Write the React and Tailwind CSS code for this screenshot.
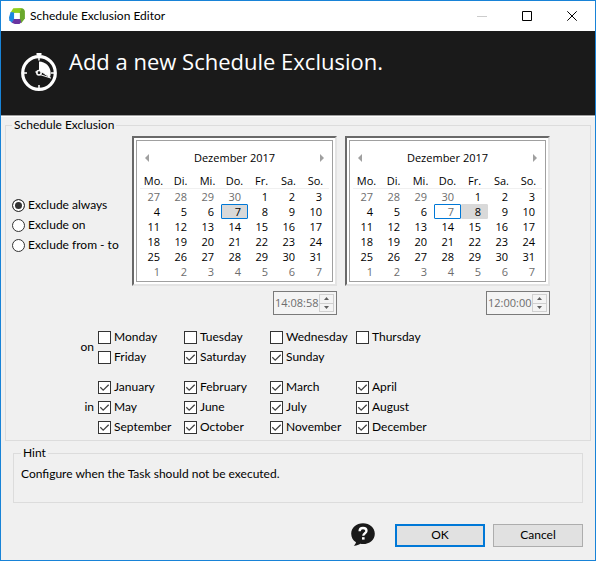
import React from 'react';

const DAYS = ['Mo.', 'Di.', 'Mi.', 'Do.', 'Fr.', 'Sa.', 'So.'];
const WEEKS = [
  [27, 28, 29, 30, 1, 2, 3],
  [4, 5, 6, 7, 8, 9, 10],
  [11, 12, 13, 14, 15, 16, 17],
  [18, 19, 20, 21, 22, 23, 24],
  [25, 26, 27, 28, 29, 30, 31],
  [1, 2, 3, 4, 5, 6, 7],
];

const WEEKDAYS = [
  ['Monday', false], ['Tuesday', false], ['Wednesday', false], ['Thursday', false],
  ['Friday', false], ['Saturday', true], ['Sunday', true],
];
const MONTHS = [
  'January', 'February', 'March', 'April', 'May', 'June',
  'July', 'August', 'September', 'October', 'November', 'December',
];

function Logo() {
  return (
    <svg className="size-4" viewBox="0 0 16 16" aria-hidden="true">
      <path d="M4.300 0.300L12.500 0 11 4.900H4.800L1.600 4.500z" fill="#8fce1c" />
      <path d="M12.500 0c1.800 0.400 3.300 1.800 3.400 3.600v7l-3.700 4.600-1.700-3.700V4.600z" fill="#69a82c" />
      <path d="M1.600 3.900l3.700 0.500v6.900l-2.200 3.600L0.300 12.300 0 9.500z" fill="#1e88e0" />
      <path d="M5 11h6.100l1.200 3.200-1.800 1.800H5.800l-3-1.300z" fill="#6a35a0" />
      <path d="M5.200 4.900h5.600V11H5.200z" fill="#fff" />
    </svg>
  );
}

function Stopwatch() {
  return (
    <svg className="h-10 w-9 shrink-0" viewBox="0 0 36 40" fill="none" aria-hidden="true">
      <path d="M15.500 2h5v2h-1v2h-3V4h-1z" fill="#fff" />
      <circle cx="18" cy="22" r="16.300" stroke="#fff" strokeWidth="3.200" />
      <path d="M18 6v3.500M18 34v3.500M3 22h3M30 22h3" stroke="#fff" strokeWidth="1.500" />
      <path d="M18 10.500c6.500 0 11.500 5 11.700 11.500 0 1.600-0.300 3-0.700 4.200L20.500 21 18 19z" fill="#fff" />
      <path d="M19.500 20l10.200 7-11-3.500z" fill="#1a1a1a" stroke="#fff" strokeWidth="1" />
      <circle cx="18" cy="21.800" r="2.200" fill="#1a1a1a" stroke="#fff" strokeWidth="1.500" />
      <path d="M14.500 20.800l2 0.600" stroke="#fff" strokeWidth="1.500" />
    </svg>
  );
}

function HelpIcon() {
  return (
    <svg className="h-6 w-6" viewBox="0 0 24 24" fill="none" aria-hidden="true">
      <path d="M12 0.300C5.400 0.300 0.200 4.700 0.200 10.700c0 3.600 1.800 6.600 4.800 8.500-0.300 1.300-1 2.400-2.300 3.400 2.600 0.200 4.800-0.500 6.600-1.800 0.900 0.200 1.800 0.300 2.700 0.300 6.600 0 11.800-4.400 11.800-10.400S18.600 0.300 12 0.300z" fill="#1a1a1a" />
      <path d="M8.600 8.200C8.600 6 10 5 12 5s3.500 1.100 3.500 3c0 2.200-3.200 2.300-3.200 4.700" stroke="#fff" strokeWidth="2.300" />
      <path d="M11 14.200h2.600v2.400H11z" fill="#fff" />
    </svg>
  );
}

function dayClass(week, day, selected) {
  const outside = (week === 0 && day > 20) || week === 5;
  const today = week === 1 && day === 7;
  const chosen = week === 1 && day === selected;
  if (today && chosen) return 'border-[#0078d7] bg-[#d9d9d9] text-black';
  if (today) return 'border-[#0078d7] bg-white text-[#6d6d6d]';
  if (chosen) return 'border-[#d9d9d9] bg-[#d9d9d9] text-black';
  return outside ? 'border-transparent text-[#6d6d6d]' : 'border-transparent text-black';
}

function Calendar({ selected }) {
  return (
    <div className="border-2 border-t-[#696969] border-r-[#e3e3e3] border-b-[#e3e3e3] border-l-[#696969] bg-white p-0.5">
      <div className="border border-[#a0a0a0] px-[3px] pb-0.5">
        <div className="flex h-[33px] items-center justify-between px-[5px]">
          <button type="button" aria-label="Previous month">
            <svg className="h-2 w-1" viewBox="0 0 4 8"><path d="M4 0v8L0 4z" fill="#a0a0a0" /></svg>
          </button>
          <span>Dezember 2017</span>
          <button type="button" aria-label="Next month">
            <svg className="h-2 w-1" viewBox="0 0 4 8"><path d="M0 0v8l4-4z" fill="#a0a0a0" /></svg>
          </button>
        </div>
        <table className="w-full table-fixed border-separate border-spacing-0">
          <thead>
            <tr>
              {DAYS.map((d) => (
                <th key={d} className="border-b border-[#f0f0f0] p-0 text-center font-normal leading-[14px]">{d}</th>
              ))}
            </tr>
          </thead>
          <tbody>
            {WEEKS.map((week, w) => (
              <tr key={w}>
                {week.map((day) => (
                  <td key={day} className="p-0">
                    <div className={`h-[15px] rounded-[1px] border pr-1.5 text-right leading-[13px] ${dayClass(w, day, selected)}`}>
                      {day}
                    </div>
                  </td>
                ))}
              </tr>
            ))}
          </tbody>
        </table>
      </div>
    </div>
  );
}

function TimeBox({ value, label }) {
  return (
    <div className="flex h-6 w-16 items-center self-end border border-[#7a7a7a] bg-[#f4f4f4] pr-0.5">
      <input type="text" aria-label={label} defaultValue={value} className="w-0 flex-1 bg-transparent pl-px text-[#6d6d6d] outline-none" />
      <div className="flex h-[18px] w-[15px] shrink-0 flex-col border border-[#d0d0d0]">
        <button type="button" aria-label="Increase" className="flex flex-1 items-center justify-center border-b border-[#d0d0d0]">
          <svg className="h-[3px] w-[5px]" viewBox="0 0 5 3"><path d="M0 3h5L2.500 0z" fill="#606060" /></svg>
        </button>
        <button type="button" aria-label="Decrease" className="flex flex-1 items-center justify-center">
          <svg className="h-[3px] w-[5px]" viewBox="0 0 5 3"><path d="M0 0h5L2.500 3z" fill="#606060" /></svg>
        </button>
      </div>
    </div>
  );
}

function Radio({ label, checked }) {
  return (
    <label className="flex h-5 items-center gap-[3px] whitespace-nowrap">
      <input
        type="radio"
        name="mode"
        defaultChecked={checked}
        className="size-[13px] shrink-0 appearance-none rounded-full border border-[#333] bg-white checked:bg-[#333] checked:shadow-[inset_0_0_0_2px_white]"
      />
      {label}
    </label>
  );
}

function Check({ label, checked }) {
  return (
    <label className="flex h-5 items-center gap-[3px] whitespace-nowrap">
      <span className="grid size-[13px] shrink-0">
        <input type="checkbox" defaultChecked={checked} className="peer col-start-1 row-start-1 size-[13px] appearance-none border border-[#333] bg-white" />
        <svg className="pointer-events-none col-start-1 row-start-1 size-[13px] opacity-0 peer-checked:opacity-100" viewBox="0 0 13 13" fill="none">
          <path d="M2.300 6.300l2.900 2.900 5.500-5.500" stroke="#444" strokeWidth="1.300" />
        </svg>
      </span>
      {label}
    </label>
  );
}

export default function App() {
  return (
    <div className="flex min-h-screen flex-col border border-[#1883d7] bg-[#f0f0f0] font-[Lato,sans-serif] text-[12px] leading-4 text-black">
      <div className="flex h-[30px] items-center bg-white pl-2">
        <Logo />
        <span className="ml-[5px] flex-1">Schedule Exclusion Editor</span>
        <button type="button" aria-label="Minimize" disabled className="flex h-full w-[45px] items-center justify-center">
          <svg className="size-[10px]" viewBox="0 0 10 10"><path d="M0 5h10v1H0z" fill="#ccc" /></svg>
        </button>
        <button type="button" aria-label="Maximize" className="flex h-full w-[45px] items-center justify-center">
          <svg className="size-[10px]" viewBox="0 0 10 10" fill="none"><path d="M0.500 0.500h9v9h-9z" stroke="#000" /></svg>
        </button>
        <button type="button" aria-label="Close" className="flex h-full w-[46px] items-center justify-center">
          <svg className="size-[10px]" viewBox="0 0 10 10" fill="none"><path d="M0.300 0.300l9.400 9.400M9.700 0.300L0.300 9.700" stroke="#000" /></svg>
        </button>
      </div>

      <header className="flex h-[85px] gap-3 border-b border-[#a0a0a0] bg-[#1a1a1a] pl-5 pt-5">
        <Stopwatch />
        <h1 className="font-['Open_Sans',sans-serif] text-[22px] leading-5 text-white">Add a new Schedule Exclusion.</h1>
      </header>

      <main className="flex flex-col border-t border-white px-1">
        <fieldset className="border border-[#dcdcdc] px-1.5 pb-[3px]">
          <legend className="px-0.5">Schedule Exclusion</legend>
          <div className="flex gap-2 pt-[3px]">
            <div className="flex w-28 shrink-0 flex-col pt-[59px]">
              <Radio label="Exclude always" checked />
              <Radio label="Exclude on" />
              <Radio label="Exclude from - to" />
            </div>
            <div className="flex w-[205px] flex-col gap-[5px] font-['Open_Sans',sans-serif] text-[11px]">
              <Calendar selected={7} />
              <TimeBox value="14:08:58" label="Start time" />
            </div>
            <div className="flex w-[205px] flex-col gap-[5px] font-['Open_Sans',sans-serif] text-[11px]">
              <Calendar selected={8} />
              <TimeBox value="12:00:00" label="End time" />
            </div>
          </div>
          <div className="flex flex-col gap-2.5 pt-3">
            <div className="flex items-center gap-1">
              <span className="w-[82px] text-right">on</span>
              <div className="grid grid-cols-[repeat(4,86px)]">
                {WEEKDAYS.map(([name, on]) => <Check key={name} label={name} checked={on} />)}
              </div>
            </div>
            <div className="flex items-center gap-1">
              <span className="w-[82px] text-right">in</span>
              <div className="grid grid-cols-[repeat(4,86px)]">
                {MONTHS.map((name) => <Check key={name} label={name} checked />)}
              </div>
            </div>
          </div>
        </fieldset>

        <fieldset className="mx-2 mt-1 h-[58px] border border-[#dcdcdc] px-[7px]">
          <legend className="px-0.5">Hint</legend>
          <p className="pt-[5px]">Configure when the Task should not be executed.</p>
        </fieldset>
      </main>

      <footer className="flex items-center justify-end gap-2 px-3 pt-5">
        <button type="button" aria-label="Help" className="mr-3"><HelpIcon /></button>
        <button type="button" className="h-[23px] w-[90px] border-2 border-[#0078d7] bg-[#e1e1e1]">OK</button>
        <button type="button" className="h-[23px] w-[90px] border border-[#adadad] bg-[#e1e1e1]">Cancel</button>
      </footer>
    </div>
  );
}
